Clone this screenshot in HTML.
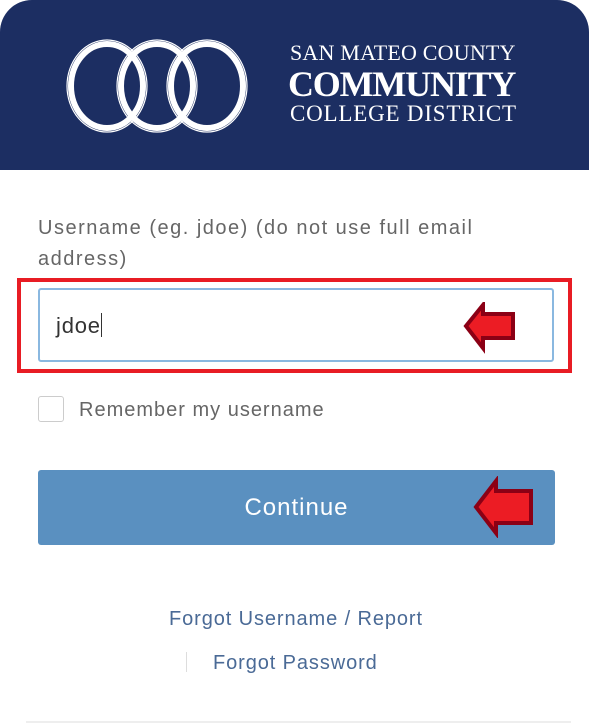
<!DOCTYPE html>
<html><head><style>
body{margin:0;width:593px;height:724px;background:#fff;position:relative;overflow:hidden;font-family:"Liberation Sans",sans-serif}
.hdr{position:absolute;left:0;top:0;width:589px;height:170px;background:#1c2e62;border-radius:32px 32px 0 0}
.t{position:absolute;color:#fff;font-family:"Liberation Serif",serif;white-space:nowrap}
.lbl{position:absolute;left:38px;top:213px;font-size:20px;line-height:31px;color:#666;width:490px;letter-spacing:1.5px}
.red{position:absolute;left:17px;top:278px;width:547px;height:87px;border:4px solid #e81c24}
.inp{position:absolute;left:38px;top:288px;width:512px;height:70px;border:2px solid #8ab8e0;border-radius:3px}
.jd{position:absolute;left:56px;top:313px;font-size:22px;color:#333;letter-spacing:.8px}
.cb{position:absolute;left:38px;top:396px;width:24px;height:24px;border:1.5px solid #ccc;border-radius:3px}
.rem{position:absolute;left:79px;top:399px;font-size:20px;color:#666;letter-spacing:1px}
.btn{position:absolute;left:38px;top:470px;width:517px;height:75px;background:#5a90c0;border-radius:3px;color:#fff;font-size:24px;text-align:center;line-height:75px;letter-spacing:1px}
.lk{position:absolute;font-size:20px;color:#4a6a96;letter-spacing:.9px}
</style></head><body>
<div class="hdr"></div>
<svg style="position:absolute;left:60px;top:36px" width="200" height="104" viewBox="0 0 200 104">
<g fill="none" stroke="#fff">
<ellipse cx="47" cy="50" rx="36" ry="42" stroke-width="6"/>
<ellipse cx="47" cy="50" rx="40" ry="46" stroke-width="1.2"/>
<ellipse cx="97" cy="50" rx="36" ry="42" stroke-width="6"/>
<ellipse cx="97" cy="50" rx="40" ry="46" stroke-width="1.2"/>
<ellipse cx="147" cy="50" rx="36" ry="42" stroke-width="6"/>
<ellipse cx="147" cy="50" rx="40" ry="46" stroke-width="1.2"/>
</g></svg>
<div class="t" style="left:290px;top:40px;font-size:22px;letter-spacing:.2px">SAN MATEO COUNTY</div>
<div class="t" style="left:288px;top:63px;font-size:36px;font-weight:bold;letter-spacing:-1.2px">COMMUNITY</div>
<div class="t" style="left:290px;top:101px;font-size:23px;letter-spacing:.8px">COLLEGE DISTRICT</div>
<div class="lbl">Username (eg. jdoe) (do not use full email address)</div>
<div class="red"></div>
<div class="inp"></div>
<div class="jd">jdoe<span style="display:inline-block;width:1px;height:24px;background:#333;vertical-align:-4px"></span></div>
<svg style="position:absolute;left:462px;top:302px" width="56" height="52"><path d="M4 24 L21 3 L21 12 L51 12 L51 36 L21 36 L21 46 Z" fill="#ec1c24" stroke="#8b0015" stroke-width="4" stroke-linejoin="miter"/></svg>
<div class="cb"></div>
<div class="rem">Remember my username</div>
<div class="btn">Continue</div>
<svg style="position:absolute;left:471px;top:476px" width="66" height="62"><path d="M5 31 L25 5 L25 15 L60 15 L60 47 L25 47 L25 57 Z" fill="#ec1c24" stroke="#8b0015" stroke-width="4"/></svg>
<div class="lk" style="left:169px;top:608px">Forgot Username / Report</div>
<div style="position:absolute;left:186px;top:652px;width:1px;height:20px;background:#ddd"></div>
<div class="lk" style="left:213px;top:652px">Forgot Password</div>
<div style="position:absolute;left:26px;top:721px;width:545px;height:2px;background:#eee"></div>
</body></html>
